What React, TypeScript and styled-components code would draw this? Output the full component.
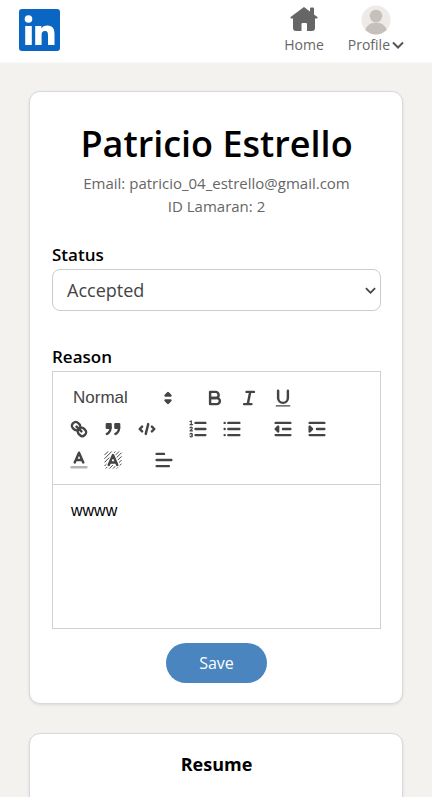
import React from "react";
import styled, { createGlobalStyle } from "styled-components";

const GlobalStyle = createGlobalStyle`
  * { box-sizing: border-box; }
  body {
    margin: 0;
    background: #f3f2ee;
    color: #000;
    font-family: "Open Sans", "Noto Sans", sans-serif;
    font-size: 15px;
  }
  h1, h2, p { margin: 0; }
  button, select, textarea { font: inherit; }
`;

const NavBar = styled.header`
  display: flex;
  align-items: center;
  justify-content: space-between;
  height: 63px;
  padding: 0 28px 2px 19px;
  background: #fff;
  border-bottom: 1px solid #f8f8f7;
`;

const LogoLink = styled.a`
  display: flex;
`;

const NavLinks = styled.nav`
  display: flex;
  gap: 24px;
`;

const navItem = `
  display: flex;
  flex-direction: column;
  align-items: center;
  padding: 0;
  border: 0;
  background: none;
  color: #666;
  font-size: 14px;
  line-height: 20px;
  text-decoration: none;
`;

const NavLink = styled.a`${navItem}`;
const NavButton = styled.button`${navItem}`;

const NavIcon = styled.span`
  display: flex;
  align-items: center;
  height: 30px;
`;

const HomeIcon = styled(NavIcon)`
  align-items: flex-start;
  padding-top: 2px;
`;

const NavLabel = styled.span`
  display: flex;
  align-items: center;
  gap: 2px;
`;

const Page = styled.main`
  display: flex;
  flex-direction: column;
  gap: 29px;
  padding: 28px 29px;
`;

const Card = styled.section`
  display: flex;
  flex-direction: column;
  padding: 21px 21px 20px 22px;
  border: 1px solid #d7d9dd;
  border-radius: 11px;
  background: #fff;
  box-shadow: 0 1px 3px rgba(0, 0, 0, 0.1);
`;

const Applicant = styled.div`
  text-align: center;
  color: #666;
  line-height: 23px;
`;

const Name = styled.h1`
  padding-top: 3px;
  color: #000;
  font-size: 36px;
  font-weight: 600;
  line-height: 56px;
`;

const Field = styled.div`
  display: flex;
  flex-direction: column;
  margin-top: 23px;
`;

const ReasonField = styled(Field)`
  margin-top: 32px;
`;

const Label = styled.label`
  font-size: 17px;
  font-weight: 600;
  line-height: 28px;
`;

const SelectWrap = styled.div`
  display: grid;
  align-items: center;
  > * { grid-area: 1 / 1; }
  > svg {
    justify-self: end;
    margin-right: 5px;
    pointer-events: none;
  }
`;

const StatusSelect = styled.select`
  width: 100%;
  height: 42px;
  padding: 0 14px;
  appearance: none;
  border: 1px solid #ccc;
  border-radius: 8px;
  background: #fff;
  color: #444;
  font-size: 18px;
`;

const Editor = styled.div`
  border: 1px solid #d0d0d0;
`;

const Toolbar = styled.div`
  display: flex;
  flex-wrap: wrap;
  column-gap: 17px;
  padding: 10px 9px 9px;
  border-bottom: 1px solid #d0d0d0;
`;

const Group = styled.div`
  display: flex;
`;

const ToolButton = styled.button`
  display: flex;
  align-items: center;
  justify-content: center;
  width: 34px;
  height: 31px;
  padding: 0;
  border: 0;
  background: none;
`;

const FormatWrap = styled(SelectWrap)`
  width: 119px;
  > svg { margin-right: 2px; }
`;

const FormatSelect = styled.select`
  height: 31px;
  padding: 0 11px;
  appearance: none;
  border: 0;
  background: none;
  color: #444;
  font-family: "Liberation Sans", Arial, sans-serif;
  font-size: 17px;
`;

const Reason = styled.textarea`
  display: block;
  width: 100%;
  height: 143px;
  padding: 14px 18px;
  resize: none;
  border: 0;
  outline: 0;
  background: none;
  color: #000;
  font-family: "Liberation Sans", Arial, sans-serif;
  font-size: 16px;
  line-height: 23px;
`;

const SaveButton = styled.button`
  align-self: center;
  height: 40px;
  margin-top: 14px;
  padding: 0 33px;
  border: 0;
  border-radius: 20px;
  background: #4a85bf;
  color: #fff;
  font-size: 16px;
`;

const ResumeCard = styled(Card)`
  min-height: 320px;
  padding-top: 16px;
`;

const ResumeTitle = styled.h2`
  text-align: center;
  font-size: 18px;
  font-weight: 700;
  line-height: 28px;
`;

const Glyph = styled.svg`
  width: 22px;
  height: 22px;
  fill: none;
  stroke: #444;
  stroke-width: 2;
  stroke-linecap: round;
  stroke-linejoin: round;
  .solid { fill: #444; }
  .fill { fill: #444; stroke: none; }
  .thin { stroke-width: 1; }
`;

type Tool = { name: string; art: React.ReactNode };

const bold: Tool = {
  name: "Bold",
  art: (
    <>
      <path d="M5,4H9.5A2.5,2.5,0,0,1,12,6.5v0A2.5,2.5,0,0,1,9.5,9H5V4Z" />
      <path d="M5,9h5.5A2.5,2.5,0,0,1,13,11.5v0A2.5,2.5,0,0,1,10.5,14H5V9Z" />
    </>
  ),
};
const italic: Tool = { name: "Italic", art: <path d="M7,4H13M5,14H11M8,14L10,4" /> };
const underline: Tool = {
  name: "Underline",
  art: (
    <>
      <path d="M5,3V9a4,4,0,0,0,8,0V3" />
      <rect className="fill" x="3" y="15" width="12" height="1" rx="0.5" />
    </>
  ),
};
const link: Tool = {
  name: "Link",
  art: (
    <>
      <path d="M7,7L11,11" />
      <path d="M8.9,4.577a3.476,3.476,0,0,1,.36,4.679A3.476,3.476,0,0,1,4.577,8.9C3.185,7.5,2.035,6.4,4.217,4.217S7.5,3.185,8.9,4.577Z" />
      <path d="M13.423,9.1a3.476,3.476,0,0,0-4.679-.36,3.476,3.476,0,0,0,.36,4.679c1.392,1.392,2.5,2.542,4.679.36S14.815,10.5,13.423,9.1Z" />
    </>
  ),
};
const quote: Tool = {
  name: "Quote",
  art: (
    <>
      <rect className="solid" x="4" y="5" width="3" height="3" />
      <rect className="solid" x="11" y="5" width="3" height="3" />
      <path className="solid" d="M7,8c0,4.031-3,5-3,5" />
      <path className="solid" d="M14,8c0,4.031-3,5-3,5" />
    </>
  ),
};
const code: Tool = { name: "Code block", art: <path d="M5,7L3,9L5,11M13,7L15,9L13,11M10,5L8,13" /> };
const ordered: Tool = {
  name: "Numbered list",
  art: (
    <>
      <path d="M7,4H15M7,9H15M7,14H15" />
      <path className="thin" d="M2.5,5.5H4.5" />
      <path className="fill" d="M3.5,6A0.5,0.5,0,0,1,3,5.5V3.085l-0.276.138A0.5,0.5,0,0,1,2.053,3c-0.124-.247-0.023-0.324.224-0.447l1-.5A0.5,0.5,0,0,1,4,2.5v3A0.5,0.5,0,0,1,3.5,6Z" />
      <path className="thin" d="M4.5,10.5h-2c0-.234,1.85-1.076,1.85-2.234A0.959,0.959,0,0,0,2.5,8.156" />
      <path className="thin" d="M2.5,14.846a0.959,0.959,0,0,0,1.85-.109A0.7,0.7,0,0,0,3.75,14a0.688,0.688,0,0,0,.6-0.736,0.959,0.959,0,0,0-1.85-.109" />
    </>
  ),
};
const bullets: Tool = { name: "Bulleted list", art: <path d="M6,4H15M6,9H15M6,14H15M3,4H3M3,9H3M3,14H3" /> };
const outdent: Tool = {
  name: "Decrease indent",
  art: (
    <>
      <path d="M3,14H15M3,4H15M9,9H15" />
      <path className="solid" d="M5,7V11L3,9Z" />
    </>
  ),
};
const indent: Tool = {
  name: "Increase indent",
  art: (
    <>
      <path d="M3,14H15M3,4H15M9,9H15" />
      <path className="solid" d="M3,7V11L5,9Z" />
    </>
  ),
};
const color: Tool = {
  name: "Text colour",
  art: (
    <>
      <path d="M3,15H15" opacity="0.4" />
      <path d="M5.5,11L9,3L12.5,11M11.63,9H6.38" />
    </>
  ),
};
const highlight: Tool = {
  name: "Highlight colour",
  art: (
    <>
      <path
        strokeWidth="0.8"
        strokeLinecap="butt"
        d="M2,5L5,2M2,8L8,2M2,11L11,2M2,14L14,2M3,16L16,3M6,16L16,6M9,16L16,9M12,16L16,12"
      />
      <path d="M5.5,13L9,5L12.5,13M11.63,11H6.38" stroke="#fff" strokeWidth="4" />
      <path d="M5.5,13L9,5L12.5,13M11.63,11H6.38" />
    </>
  ),
};
const align: Tool = { name: "Align", art: <path d="M3,9H15M3,14H13M3,4H9" /> };

const groups: Tool[][] = [
  [bold, italic, underline],
  [link, quote, code],
  [ordered, bullets],
  [outdent, indent],
  [color, highlight],
  [align],
];

function ToolGroup({ tools }: { tools: Tool[] }) {
  return (
    <Group>
      {tools.map((tool) => (
        <ToolButton key={tool.name} type="button" aria-label={tool.name}>
          <Glyph viewBox="0 0 18 18" aria-hidden="true">{tool.art}</Glyph>
        </ToolButton>
      ))}
    </Group>
  );
}

function Chevron({ size, color = "#444" }: { size: number; color?: string }) {
  return (
    <svg width={size} height={size} viewBox="0 0 12 12" fill="none" stroke={color} strokeWidth="2" aria-hidden="true">
      <path d="M1,3.5L6,8.5L11,3.5" />
    </svg>
  );
}

function Logo() {
  return (
    <svg width="41" height="42" viewBox="0 0 41 42" aria-hidden="true">
      <rect width="41" height="42" rx="3" fill="#0a66c2" />
      <g fill="#fff">
        <circle cx="9.5" cy="10" r="3.8" />
        <path d="M6.2,17h6.600v19h-6.600ZM16.200,17h6.200v2.600c1-1.800,3.100-3.100,5.900-3.100c5.700,0,7.200,3.600,7.200,9v10.500h-6.500v-9.500c0-2.600-.4-4.400-3.100-4.400s-3.300,1.800-3.300,4.400v9.500h-6.400Z" />
      </g>
    </svg>
  );
}

export default function App() {
  return (
    <>
      <GlobalStyle />
      <NavBar>
        <LogoLink href="#" aria-label="LinkedIn"><Logo /></LogoLink>
        <NavLinks>
          <NavLink href="#">
            <HomeIcon>
              <svg width="28" height="24" viewBox="0 0 28 24" fill="#666" aria-hidden="true">
                <path d="M14,0L20,4.500V1.500Q20,.5,21,.5H23Q24,.5,24,1.500V7.500L27.400,10Q28,10.800,27.200,11.600H25V21Q25,24,22,24H17V17Q17,16,16,16H12.500Q11.500,16,11.500,17V24H6Q3,24,3,21V11.600H1Q0,10.800,.6,10Z" />
              </svg>
            </HomeIcon>
            <NavLabel>Home</NavLabel>
          </NavLink>
          <NavButton type="button">
            <NavIcon>
              <svg width="30" height="30" viewBox="0 0 30 30" aria-hidden="true">
                <clipPath id="avatar"><circle cx="15" cy="15" r="14.500" /></clipPath>
                <g clipPath="url(#avatar)">
                  <rect width="30" height="30" fill="#eeebe6" />
                  <circle cx="15" cy="11" r="6.300" fill="#c5c1ba" />
                  <path d="M3,30C4,21,9,17.500,15,17.500S26,21,27,30Z" fill="#c5c1ba" />
                </g>
              </svg>
            </NavIcon>
            <NavLabel>Profile <Chevron size={12} color="#555" /></NavLabel>
          </NavButton>
        </NavLinks>
      </NavBar>
      <Page>
        <Card>
          <Applicant>
            <Name>Patricio Estrello</Name>
            <p>Email: patricio_04_estrello@gmail.com</p>
            <p>ID Lamaran: 2</p>
          </Applicant>
          <Field>
            <Label htmlFor="status">Status</Label>
            <SelectWrap>
              <StatusSelect id="status" defaultValue="Accepted">
                <option>Accepted</option>
              </StatusSelect>
              <Chevron size={11} />
            </SelectWrap>
          </Field>
          <ReasonField>
            <Label htmlFor="reason">Reason</Label>
            <Editor>
              <Toolbar role="toolbar" aria-label="Formatting">
                <FormatWrap>
                  <FormatSelect aria-label="Text style" defaultValue="Normal">
                    <option>Normal</option>
                  </FormatSelect>
                  <Glyph viewBox="0 0 18 18" aria-hidden="true">
                    <path className="solid" d="M7,11L9,13L11,11ZM7,7L9,5L11,7Z" />
                  </Glyph>
                </FormatWrap>
                {groups.map((tools) => <ToolGroup key={tools[0].name} tools={tools} />)}
              </Toolbar>
              <Reason id="reason" defaultValue="wwww" />
            </Editor>
          </ReasonField>
          <SaveButton type="button">Save</SaveButton>
        </Card>
        <ResumeCard>
          <ResumeTitle>Resume</ResumeTitle>
        </ResumeCard>
      </Page>
    </>
  );
}
